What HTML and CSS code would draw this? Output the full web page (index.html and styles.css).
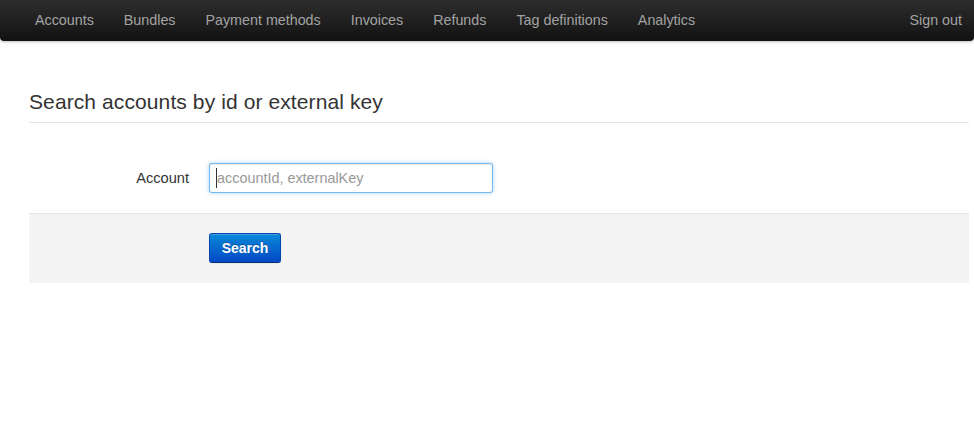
FILE: index.html
```html
<!DOCTYPE html>
<html>
<head>
<meta charset="utf-8">
<link rel="stylesheet" href="styles.css">
</head>
<body>
<div class="navbar">
  <ul class="nav">
    <li><a href="#">Accounts</a></li>
    <li><a href="#">Bundles</a></li>
    <li><a href="#">Payment methods</a></li>
    <li><a href="#">Invoices</a></li>
    <li><a href="#">Refunds</a></li>
    <li><a href="#">Tag definitions</a></li>
    <li><a href="#">Analytics</a></li>
  </ul>
  <ul class="nav nav-right">
    <li><a href="#" class="last">Sign out</a></li>
  </ul>
</div>
<div class="container">
  <form class="form-horizontal">
    <div class="legend">Search accounts by id or external key</div>
    <div class="control-group">
      <label class="control-label">Account</label>
      <div class="controls">
        <input class="input-xlarge" type="text" placeholder="accountId, externalKey">
        <span class="caret"></span>
      </div>
    </div>
    <div class="form-actions">
      <button type="button" class="btn-primary">Search</button>
    </div>
  </form>
</div>
</body>
</html>
```
FILE: styles.css
```css
* { box-sizing: border-box; }
body {
  margin: 0;
  font-family: "Liberation Sans", Arial, sans-serif;
  font-size: 14.6px;
  line-height: 20px;
  color: #333;
  background: #fff;
}
.navbar {
  display: flex;
  justify-content: space-between;
  height: 41px;
  padding-left: 20px;
  background: linear-gradient(to bottom, #2d2d2d, #121212);
  border-radius: 0 0 4px 4px;
  box-shadow: 0 1px 3px rgba(0,0,0,0.25);
}
.nav {
  display: flex;
  list-style: none;
  margin: 0;
  padding: 0;
}
.nav a {
  display: block;
  padding: 10px 15px 11px;
  color: #a3a3a3;
  text-decoration: none;
  font-size: 14.3px;
  line-height: 20px;
}
.nav a.last { padding-right: 12px; }
.container {
  width: 940px;
  margin: 0 0 0 29px;
}
.legend {
  margin-top: 41px;
  font-size: 21px;
  letter-spacing: 0.1px;
  line-height: 40px;
  color: #333;
  border-bottom: 1px solid #e5e5e5;
  margin-bottom: 40px;
}
.control-group {
  display: flex;
  margin-bottom: 20px;
}
.control-label {
  width: 160px;
  text-align: right;
  padding-top: 5px;
  line-height: 20px;
  color: #333;
}
.controls {
  position: relative;
  margin-left: 20px;
}
.input-xlarge {
  display: block;
  width: 284px;
  height: 30px;
  padding: 4px 6px 4px 7px;
  font-family: "Liberation Sans", Arial, sans-serif;
  font-size: 14.4px;
  color: #555;
  border: 1px solid rgba(82,168,236,0.8);
  border-radius: 3px;
  box-shadow: inset 0 1px 1px rgba(0,0,0,0.075), 0 0 4px rgba(82,168,236,0.5);
  outline: none;
}
.input-xlarge::placeholder { color: #999; }
.caret {
  position: absolute;
  left: 7px;
  top: 5px;
  width: 1px;
  height: 20px;
  background: #333;
}
.form-actions {
  height: 70px;
  padding: 19px 20px 20px 180px;
  background: #f4f4f4;
  border-top: 1px solid #e5e5e5;
}
.btn-primary {
  width: 72px;
  height: 30px;
  padding: 0;
  font-family: "Liberation Sans", Arial, sans-serif;
  font-size: 14px;
  font-weight: bold;
  color: #fff;
  background: linear-gradient(to bottom, #0a88d8, #0349c4);
  border: 1px solid #0344b0;
  border-bottom-color: #022f7a;
  border-radius: 3px;
  box-shadow: inset 0 1px 0 rgba(255,255,255,0.2), 0 1px 2px rgba(0,0,0,0.05);
  text-shadow: 0 -1px 0 rgba(0,0,0,0.25);
}
```
